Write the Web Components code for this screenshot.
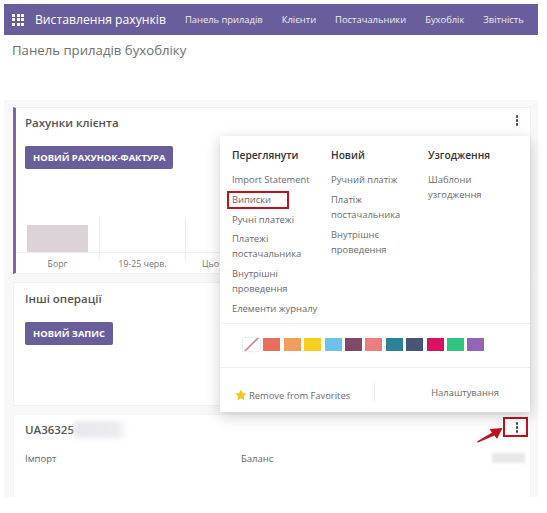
<!DOCTYPE html>
<html lang="uk">
<head>
<meta charset="utf-8">
<title>Панель приладів бухобліку</title>
<style>
  html,body{ margin:0; background:#fff; }
  body{ font-family:"Open Sans","Noto Sans",sans-serif; height:513px; overflow:hidden; }
  .page{ padding:4px 9px 0 4px; }
</style>
</head>
<body>
<div class="page">
  <app-nav></app-nav>
  <page-title>Панель приладів бухобліку</page-title>
  <dash-board>
    <journal-card accent title-text="Рахунки клієнта" style="height:167px">
      <purple-btn>Новий рахунок-фактура</purple-btn>
      <mini-chart></mini-chart>
      <card-menu slot="over"></card-menu>
    </journal-card>
    <journal-card title-text="Інші операції" style="height:124px;--pt:6px" no-dots>
      <purple-btn>Новий запис</purple-btn>
    </journal-card>
    <journal-card title-text="UA36325" blurred boxed style="height:83px;border-bottom:0;border-color:#f3f4f5">
      <bank-row></bank-row>
    </journal-card>
  </dash-board>
</div>

<script>
(() => {
  // small helper, every element below does the same thing in its constructor
  const shadow = (el, html) => { el.attachShadow({mode:'open'}).innerHTML = html; };

  class AppNav extends HTMLElement {
    constructor(){
      super();
      shadow(this, `
        <style>
          :host{ display:flex; align-items:center; height:31px; background:#6a5d9b; color:#fff; padding-left:8px; white-space:nowrap; overflow:hidden; }
          .grid{ display:grid; grid-template-columns:repeat(3,3px); gap:1.5px; margin-right:11px; }
          .grid i{ width:3px; height:3px; background:#fff; }
          .brand{ font-size:12.2px; margin-right:19px; }
          a{ font-size:9.4px; color:#eee; margin-right:19px; }
          a:last-child{ margin-right:0; }
        </style>
        <div class="grid">${'<i></i>'.repeat(9)}</div>
        <span class="brand">Виставлення рахунків</span>
        <a>Панель приладів</a><a>Клієнти</a><a>Постачальники</a><a>Бухоблік</a><a>Звітність</a>`);
    }
  }

  class PageTitle extends HTMLElement {
    constructor(){
      super();
      shadow(this, `
        <style>:host{ display:block; height:65px; box-sizing:border-box; padding:7px 0 0 8px; font-size:13.2px; line-height:17px; color:#6f6f6f; }</style>
        <slot></slot>`);
    }
  }

  class DashBoard extends HTMLElement {
    constructor(){
      super();
      shadow(this, `
        <style>
          :host{ display:flex; flex-direction:column; gap:8px; background:#f8f8f9; padding:7px 7px 0 9px; height:397px; box-sizing:border-box; }
          ::slotted(*){ flex:none; }
        </style>
        <slot></slot>`);
    }
  }

  class JournalCard extends HTMLElement {
    constructor(){
      super();
      const title = this.getAttribute('title-text');
      const accent = this.hasAttribute('accent');
      const blurred = this.hasAttribute('blurred');
      const boxed = this.hasAttribute('boxed');
      const dots = !this.hasAttribute('no-dots');
      shadow(this, `
        <style>
          :host{ display:block; position:relative; background:#fff; box-sizing:border-box; border:1px solid #eef0f1; ${accent ? 'border-left:3px solid #7c66a8;' : ''} padding:var(--pt,5px) 0 0 ${accent ? 9 : 11}px; }
          .head{ display:flex; align-items:center; height:18px; margin-bottom:13px; font-size:11.5px; font-weight:600; color:#555; }
          .blur{ width:54px; height:17px; background:linear-gradient(90deg,#e9e8ee,#ecebf0 80%,#fff); filter:blur(2px); }
          .dots{ position:absolute; right:12px; top:7px; display:flex; flex-direction:column; gap:1.5px; }
          .dots i{ width:2.5px; height:2.5px; background:#444; border-radius:50%; }
          .box{ position:absolute; right:2px; top:2px; width:25px; height:20px; border:2px solid #bd141d; box-sizing:border-box; }
          svg{ position:absolute; right:27px; top:11px; }
        </style>
        <div class="head"><span>${title}</span>${blurred ? '<div class="blur"></div>' : ''}</div>
        ${dots ? '<div class="dots"><i></i><i></i><i></i></div>' : ''}
        ${boxed ? `<div class="box"></div>
          <svg width="27" height="17" viewBox="0 0 27 17"><path d="M1 15.5 L16 6.5 L13.5 3 L26.5 2 L21 13 L18.5 9.5 L2 16.5 Z" fill="#bd141d"/></svg>` : ''}
        <slot></slot>
        <slot name="over"></slot>`);
    }
  }

  class PurpleBtn extends HTMLElement {
    constructor(){
      super();
      shadow(this, `
        <style>:host{ display:inline-block; background:#6a5d9b; color:#fff; border-radius:2px; font-size:9.4px; font-weight:700; text-transform:uppercase; padding:0 8px; height:23px; line-height:23px; white-space:nowrap; }</style>
        <slot></slot>`);
    }
  }

  class MiniChart extends HTMLElement {
    constructor(){
      super();
      shadow(this, `
        <style>
          :host{ display:grid; grid-template-columns:84px 86px 1fr; position:absolute; left:0; right:0; top:109px; font-size:8.8px; line-height:12px; color:#777; text-align:center; }
          .col{ height:43px; border-right:1px solid #eee; }
          .col:last-child{ border-right:0; }
          .plot{ position:relative; height:35px; border-bottom:1px solid #eee; margin-bottom:5px; }
          .bar{ position:absolute; left:11px; bottom:0; width:61px; height:27px; background:#dcd2d8; }
          .last{ text-align:left; padding-left:16px; }
        </style>
        <div class="col"><div class="plot"><span class="bar"></span></div>Борг</div>
        <div class="col"><div class="plot"></div>19-25 черв.</div>
        <div class="col"><div class="plot"></div><div class="last">Цьо</div></div>`);
    }
  }

  class CardMenu extends HTMLElement {
    constructor(){
      super();
      const colors = ['#eb6e5c','#f29e5f','#f7cd1f','#6cc1ed','#814968','#eb7e7f','#2c8397','#475577','#d6145f','#30c381','#9365b8'];
      shadow(this, `
        <style>
          :host{ display:block; position:absolute; z-index:3; left:204px; top:28px; width:310px; height:276px; background:#fff; box-shadow:0 4px 14px rgba(0,0,0,.2); font-size:9.4px; color:#6b6b6b; }
          .cols{ display:grid; grid-template-columns:99px 97px 1fr; padding:12px 12px 0; height:187px; box-sizing:border-box; }
          h4{ margin:0 0 10px; font-size:10.2px; font-weight:600; color:#333; line-height:14px; }
          a{ display:block; line-height:15px; margin-bottom:4.8px; max-width:92px; }
          .hl{ position:relative; }
          .hl::after{ content:""; position:absolute; left:-5px; top:-1px; width:62px; height:18px; border:2px solid #bd141d; box-sizing:border-box; }
          .swatches{ display:flex; gap:3.4px; padding:14px 0 0 23px; border-top:1px solid #eee; border-bottom:1px solid #eee; height:45px; box-sizing:border-box; }
          .swatches i{ width:17px; height:13px; display:block; }
          .swatches i.none{ background:linear-gradient(135deg,#fff 46%,#c58a9d 47%,#c58a9d 53%,#fff 54%); box-shadow:0 0 2px #ccc; }
          .foot{ display:flex; align-items:center; height:44px; padding-top:5px; box-sizing:border-box; }
          .fav{ width:155px; display:flex; align-items:flex-end; gap:2px; padding-left:15px; box-sizing:border-box; border-right:1px solid #eee; height:19px; line-height:12px; }
          .fav svg{ margin-bottom:1px; }
          .set{ flex:1; text-align:right; padding-right:31px; }
        </style>
        <div class="cols">
          <div><h4>Переглянути</h4><a>Import Statement</a><a class="hl">Виписки</a><a>Ручні платежі</a><a>Платежі постачальника</a><a>Внутрішні проведення</a><a>Елементи журналу</a></div>
          <div><h4>Новий</h4><a>Ручний платіж</a><a>Платіж постачальника</a><a>Внутрішнє проведення</a></div>
          <div><h4>Узгодження</h4><a>Шаблони узгодження</a></div>
        </div>
        <div class="swatches"><i class="none"></i>${colors.map(c => `<i style="background:${c}"></i>`).join('')}</div>
        <div class="foot">
          <div class="fav"><svg width="12" height="12" viewBox="0 0 24 24"><path d="M12 1l3.4 7.2 7.6 1-5.6 5.4 1.4 7.8L12 18.6 5.2 22.4l1.4-7.8L1 9.2l7.6-1z" fill="#f5c518"/></svg><span>Remove from Favorites</span></div>
          <div class="set">Налаштування</div>
        </div>`);
    }
  }

  class BankRow extends HTMLElement {
    constructor(){
      super();
      shadow(this, `
        <style>
          :host{ display:grid; grid-template-columns:216px 1fr auto; align-items:center; font-size:9.5px; color:#666; padding-right:5px; height:14px; }
          i{ width:33px; height:10px; background:#e8e7ea; filter:blur(1.5px); display:block; }
        </style>
        <span>Імпорт</span><span>Баланс</span><i></i>`);
    }
  }

  customElements.define('app-nav', AppNav);
  customElements.define('page-title', PageTitle);
  customElements.define('dash-board', DashBoard);
  customElements.define('journal-card', JournalCard);
  customElements.define('purple-btn', PurpleBtn);
  customElements.define('mini-chart', MiniChart);
  customElements.define('card-menu', CardMenu);
  customElements.define('bank-row', BankRow);
})();
</script>
</body>
</html>
